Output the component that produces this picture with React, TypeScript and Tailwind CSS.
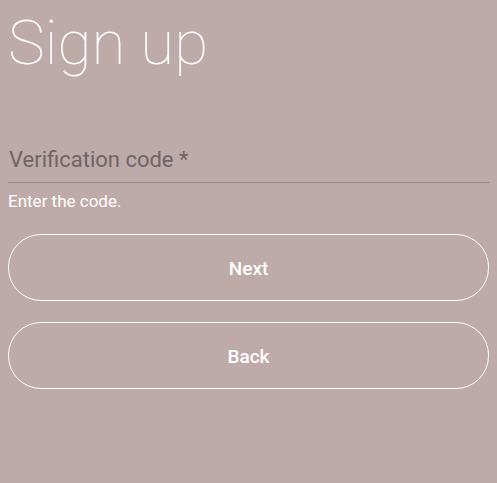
import React from 'react';

export default function App() {
  return (
    <div className="min-h-[483px] bg-[#bfaaaa] px-2 pt-[3px] font-['Roboto',sans-serif]">
      <h1 className="text-[62px] font-thin leading-[80px] text-white">Sign up</h1>

      <div className="mt-[64px]">
        <div className="border-b border-[#958585] pb-[9px] pl-px text-[22px] leading-[26px] text-[#706464]">
          Verification code *
        </div>
        <p className="mt-[8px] text-[17px] leading-[20px] text-white">Enter the code.</p>
      </div>

      <div className="mt-[23px] flex flex-col gap-[21px]">
        <button className="h-[67px] w-full rounded-[33px] border border-white pt-[3px] text-[19px] font-medium text-white">
          Next
        </button>
        <button className="h-[67px] w-full rounded-[33px] border border-white pt-[3px] text-[19px] font-medium text-white">
          Back
        </button>
      </div>
    </div>
  );
}
